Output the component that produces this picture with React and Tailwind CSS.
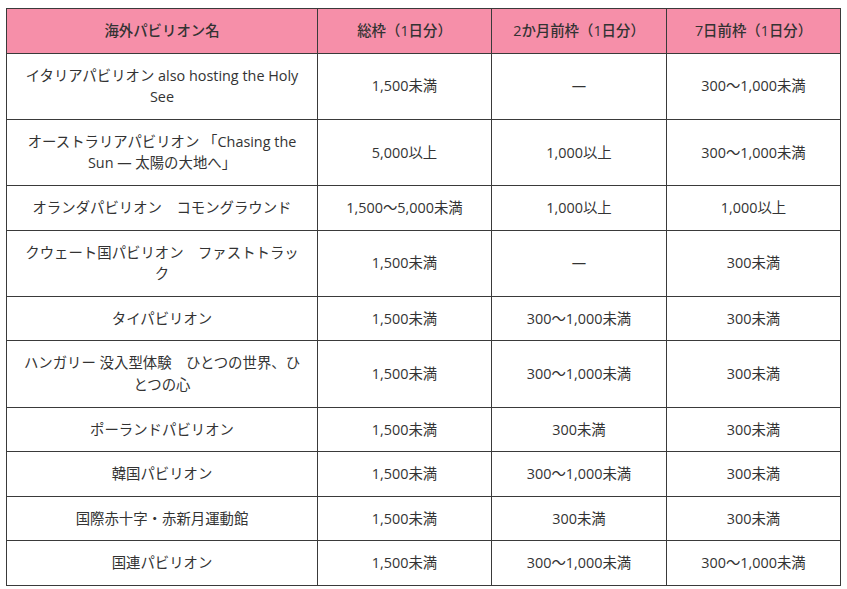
import React from "react";

const rows = [
  ["イタリアパビリオン also hosting the Holy See", "1,500未満", "—", "300～1,000未満"],
  ["オーストラリアパビリオン 「Chasing the Sun — 太陽の大地へ」", "5,000以上", "1,000以上", "300～1,000未満"],
  ["オランダパビリオン　コモングラウンド", "1,500～5,000未満", "1,000以上", "1,000以上"],
  ["クウェート国パビリオン　ファストトラック", "1,500未満", "—", "300未満"],
  ["タイパビリオン", "1,500未満", "300～1,000未満", "300未満"],
  ["ハンガリー 没入型体験　ひとつの世界、ひとつの心", "1,500未満", "300～1,000未満", "300未満"],
  ["ポーランドパビリオン", "1,500未満", "300未満", "300未満"],
  ["韓国パビリオン", "1,500未満", "300～1,000未満", "300未満"],
  ["国際赤十字・赤新月運動館", "1,500未満", "300未満", "300未満"],
  ["国連パビリオン", "1,500未満", "300～1,000未満", "300～1,000未満"],
];

const headers = ["海外パビリオン名", "総枠（1日分）", "2か月前枠（1日分）", "7日前枠（1日分）"];

export default function App() {
  return (
    <div
      className="bg-white w-[847px] h-[589px] overflow-hidden pt-[8px] pl-[6px]"
      style={{ fontFamily: '"Open Sans", "Noto Sans CJK JP", sans-serif' }}
    >
      <table className="table-fixed border-collapse w-[834px] text-[14.4px] leading-[21.6px] text-[#333] text-center">
        <colgroup>
          <col className="w-[311px]" />
          <col className="w-[174px]" />
          <col className="w-[175px]" />
          <col className="w-[174px]" />
        </colgroup>
        <thead>
          <tr className="bg-[#f68fa9]">
            {headers.map((h) => (
              <th key={h} className="border border-[#3a3a3a] px-[14px] py-[11px] font-medium">
                {h}
              </th>
            ))}
          </tr>
        </thead>
        <tbody>
          {rows.map((r) => (
            <tr key={r[0]}>
              {r.map((c, i) => (
                <td key={i} className="border border-[#3a3a3a] px-[14px] py-[11px]">
                  {c}
                </td>
              ))}
            </tr>
          ))}
        </tbody>
      </table>
    </div>
  );
}
